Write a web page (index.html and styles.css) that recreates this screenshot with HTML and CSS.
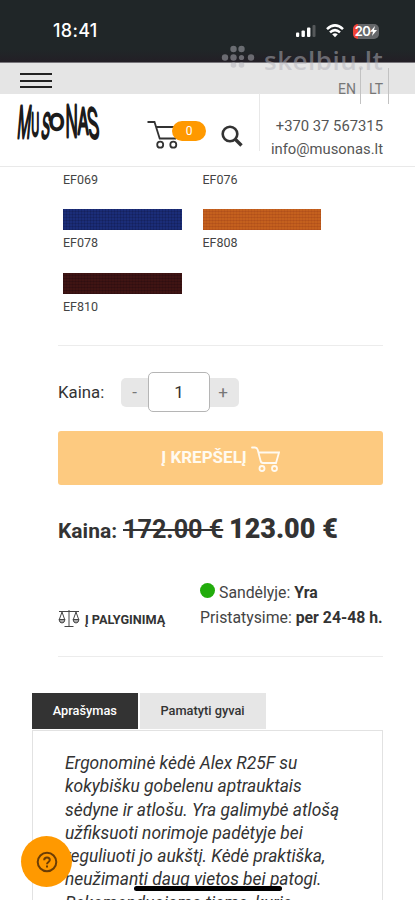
FILE: index.html
```html
<!DOCTYPE html>
<html lang="lt">
<head>
<meta charset="utf-8">
<title>Musonas</title>
<link rel="stylesheet" href="styles.css">
</head>
<body>
<div class="screen">
  <div class="status">
    <span class="time">18:41</span>
    <div class="status-icons">
      <svg width="20" height="14" viewBox="0 0 20 14"><g fill="#fff"><rect x="0" y="8.5" width="3.2" height="4.5" rx="1"/><rect x="5.5" y="6.5" width="3.4" height="6.5" rx="1"/><rect x="11" y="3.5" width="3.4" height="9.5" rx="1"/></g><rect x="16.5" y="1" width="3" height="12" rx="1" fill="#55585a"/></svg>
      <svg width="18" height="14" viewBox="0 0 18 14"><g fill="none" stroke="#fff" stroke-width="2.5"><path d="M1 5.2Q9-2.4 17 5.2"/><path d="M4 8.4Q9 3.8 14 8.4"/></g><path d="M6.2 10.3Q9 8.2 11.8 10.3L9 13.2Z" fill="#fff"/></svg>
      <span class="battery"><span class="pct">20</span><svg width="7" height="10" viewBox="0 0 7 10"><path d="M5 0 0 5.7h3L2 10l5-6H4Z" fill="#fff"/></svg></span>
    </div>
  </div>
  <div class="watermark">
    <svg width="34" height="24" viewBox="0 0 34 24"><g fill="currentColor"><circle cx="12.5" cy="4" r="3.2"/><circle cx="20.5" cy="4" r="3.2"/><circle cx="4" cy="12.500" r="3.200"/><circle cx="12.500" cy="12.500" r="3.200"/><circle cx="20.500" cy="12.500" r="2.600"/><circle cx="30" cy="12.500" r="3.200"/><circle cx="12.500" cy="20" r="2.800"/><circle cx="20.500" cy="20" r="2.800"/></g></svg>
    <span>skelbiu.lt</span>
  </div>
  <header class="header">
    <div class="left">
      <div class="menu"><i></i><i></i><i></i></div>
      <div class="brand">
        <svg class="logo" width="90" height="64" viewBox="-2 -12 90 64" aria-label="MUSONAS">
          <text transform="translate(.500 36) skewX(-5) scale(.34 1)" font-size="44">M</text>
          <text transform="translate(15.300 34) scale(.35 1)" font-size="31">U</text>
          <text transform="translate(24.500 35.500) skewX(-6) scale(.4 1)" font-size="34">S</text>
          <text transform="translate(33 27.500) scale(.92 1)" font-size="22">O</text>
          <text transform="translate(49.500 35) scale(.38 1)" font-size="43">N</text>
          <text transform="translate(61.500 31.500) scale(.48 1)" font-size="35">A</text>
          <text transform="translate(73 36) skewX(6) scale(.44 1)" font-size="41">S</text>
        </svg>
        <div class="basket">
          <svg width="34" height="30" viewBox="0 0 34 30"><g fill="none" stroke="#333" stroke-width="1.8"><path d="M.5 2H7.5L12.700 18.500H29M9 7H32L29 18.500"/><circle cx="13.200" cy="24.700" r="3"/><circle cx="26.300" cy="24.700" r="3"/></g></svg>
          <span class="count">0</span>
        </div>
        <svg class="search" width="22" height="22" viewBox="0 0 22 22"><g fill="none" stroke="#333"><circle cx="9" cy="9" r="7.300" stroke-width="2.600"/><path d="M14 14 20.500 20.500" stroke-width="3.400"/></g></svg>
      </div>
    </div>
    <div class="right">
      <div class="lang"><span>EN</span><span>LT</span></div>
      <div class="contacts"><span class="phone">+370 37 567315</span><span class="mail">info@musonas.lt</span></div>
    </div>
  </header>
  <main>
    <div class="swatches">
      <div class="sw cut"><span>EF069</span></div>
      <div class="sw cut"><span>EF076</span></div>
      <div class="sw"><div class="cloth blue"></div><span>EF078</span></div>
      <div class="sw"><div class="cloth orange"></div><span>EF808</span></div>
      <div class="sw"><div class="cloth maroon"></div><span>EF810</span></div>
    </div>
    <section class="buy">
      <div class="qty"><span class="qlabel">Kaina:</span><span class="step minus">-</span><span class="num">1</span><span class="step plus">+</span></div>
      <div class="add"><span>Į KREPŠELĮ</span><svg width="29" height="27" viewBox="0 0 29 27"><g fill="none" stroke="#fffaf0" stroke-width="1.800" stroke-linecap="round"><path d="M1 1.500H4Q6 1.500 6.700 3.700L9.500 14.500Q10 17 12 17H25L28 6.500H8"/><circle cx="11" cy="22.500" r="2.500"/><circle cx="23.500" cy="22.500" r="2.500"/></g></svg></div>
      <div class="price"><span class="plabel">Kaina:</span><s>172.00 €</s><b>123.00 €</b></div>
      <div class="info">
        <div class="compare"><svg width="22" height="18" viewBox="0 0 22 18"><g fill="none" stroke="#444" stroke-width="1"><path d="M1 1.500H21M11 0V16.500M6.500 16.500H15.500M4 2 1.300 9.500M4 2 6.700 9.500M18 2 15.300 9.500M18 2 20.700 9.500"/><path d="M1 9.500H7Q6.500 13 4 13T1 9.500ZM15 9.500H21Q20.500 13 18 13T15 9.500Z" fill="#aaa"/></g></svg><b>Į PALYGINIMĄ</b></div>
        <div class="stock"><div class="line1"><i class="dot"></i><span>Sandėlyje: <b>Yra</b></span></div><div class="line2">Pristatysime: <b>per 24-48 h.</b></div></div>
      </div>
    </section>
    <section class="details">
      <div class="tabs"><span class="tab active">Aprašymas</span><span class="tab">Pamatyti gyvai</span></div>
      <div class="panel">Ergonominė kėdė Alex R25F su<br>kokybišku gobelenu aptrauktais<br>sėdyne ir atlošu. Yra galimybė atlošą<br>užfiksuoti norimoje padėtyje bei<br>reguliuoti jo aukštį. Kėdė praktiška,<br>neužimanti daug vietos bei patogi.<br>Rekomenduojama tiems, kurie</div>
    </section>
  </main>
  <div class="help"><svg width="22" height="22" viewBox="0 0 22 22"><g fill="none" stroke="#6b3d05" stroke-width="2"><circle cx="11" cy="11" r="9.300"/><path d="M8.200 9.200Q8.200 6.500 11 6.500T13.800 9.100C13.800 11 11 11 11 13.300M11 14.600V16.500"/></g></svg></div>
  <div class="home"></div>
</div>
</body>
</html>
```

FILE: styles.css
```css
* { box-sizing: border-box; }
body { margin: 0; background: #fff; font-family: Roboto, sans-serif; color: #333; }
svg { display: block; flex: none; }
.screen { position: relative; width: 415px; height: 900px; overflow: hidden; }
.status { height: 63px; background: linear-gradient(#202628 80%, #231f26); display: flex; justify-content: space-between; padding: 0 34px 0 53px; border-bottom: 1px solid #77757a; }
.time { font: 500 18px/62px Inter, sans-serif; color: #fff; letter-spacing: .3px; }
.status-icons { display: flex; align-items: center; gap: 9px; height: 62px; margin-right: -1px; }
.status-icons svg:first-child { margin-right: 1px; margin-left: 2px; }
.battery { display: flex; align-items: center; justify-content: center; width: 26px; height: 15px; margin-right: 3px; border-radius: 5px; background: linear-gradient(90deg, #f04438 20%, #65676a 20%); color: #fff; }
.pct { font: 600 13px/15px Inter, sans-serif; letter-spacing: -.6px; }
.watermark { position: absolute; left: 221px; top: 45px; display: flex; gap: 9px; color: rgba(180, 180, 188, .5); font: 600 26px/31px "Open Sans", sans-serif; }
.watermark span { letter-spacing: .5px; }
.header { display: flex; height: 104px; background: linear-gradient(#e5e5e5 31px, #fff 31px); border-bottom: 1px solid #e9e9e9; }
.left { width: 260px; }
.menu { height: 30px; padding: 10px 0 0 20px; display: flex; flex-direction: column; gap: 4.500px; }
.menu i { width: 32px; height: 2px; background: #222; }
.brand { display: flex; align-items: flex-start; height: 58px; padding: 9px 0 0 16px; border-right: 1px solid #e8e8e8; }
.logo { margin: -12px -2px; overflow: visible; }
.logo text { font-family: Inter, sans-serif; font-weight: 300; fill: #1c1c1c; stroke: #1c1c1c; stroke-width: 2.300px; stroke-linejoin: round; vector-effect: non-scaling-stroke; }
.basket { display: flex; align-items: flex-start; margin: 18px 0 0 45px; }
.count { width: 34px; height: 20px; margin: 1px 0 0 -9px; border-radius: 10px; background: #f90; color: #fff; font-size: 12px; line-height: 20px; text-align: center; }
.search { margin: 23px 0 0 14.500px; }
.right { flex: 1; }
.lang { display: flex; justify-content: flex-end; height: 41px; padding: 5px 26px 0 0; font-size: 14px; color: #777; line-height: 43px; }
.lang span { border-right: 1px solid #c2c2c2; padding: 0 5px 0 8px; height: 36px; }
.lang span:first-child { padding-right: 4px; }
.contacts { display: flex; flex-direction: column; align-items: flex-end; padding: 11px 32px 0 0; font-size: 14.800px; line-height: 23px; color: #555; }
.swatches { display: grid; grid-template-columns: 118.500px 118.500px; column-gap: 21px; padding: 1px 0 0 63px; font-size: 12.500px; line-height: 14px; color: #444; }
.sw { height: 64px; }
.sw.cut { height: 41px; padding-top: 5px; }
.cloth { height: 21px; margin-bottom: 6px; }
.blue { background: repeating-linear-gradient(90deg, rgba(0,0,30,.15) 0 1px, transparent 1px 3px), repeating-linear-gradient(#1b2d78 0 2px, #182769 2px 3px); }
.orange { background: repeating-linear-gradient(90deg, rgba(90,20,0,.07) 0 1px, transparent 1px 3px), repeating-linear-gradient(#c4601e 0 2px, #b8551c 2px 3px); }
.maroon { background: repeating-linear-gradient(90deg, rgba(0,0,0,.1) 0 1px, transparent 1px 3px), repeating-linear-gradient(#3f1413 0 2px, #351012 2px 3px); }
.buy { width: 325px; height: 312px; margin: 8px 0 0 58px; border: solid #ececec; border-width: 1px 0; }
.qty { display: flex; align-items: center; height: 40px; margin-top: 26px; font-size: 17px; }
.qlabel { width: 63px; font-size: 16.800px; }
.step { width: 29px; height: 29px; line-height: 28px; background: #e7e7e7; text-align: center; color: #777; }
.minus { border-radius: 5px 0 0 5px; width: 27px; }
.plus { border-radius: 0 5px 5px 0; padding-right: 3px; }
.num { width: 62px; height: 40px; border: 1px solid #b5b5b5; border-radius: 5px; line-height: 38px; text-align: center; }
.add { display: flex; align-items: center; justify-content: center; gap: 4px; height: 54px; margin-top: 19px; background: #fdca80; border-radius: 3px; color: #fffaf0; font-size: 17px; font-weight: 700; }
.add svg { margin-top: 2px; }
.add span { margin-top: -2px; }
.price { display: flex; align-items: baseline; height: 40px; margin-top: 24px; line-height: 40px; font-weight: 700; white-space: nowrap; }
.plabel { font-size: 21px; width: 65px; }
.price s { font-size: 25.200px; width: 106px; text-decoration-thickness: 2px; }
.price b { font-size: 27px; }
.info { display: flex; justify-content: space-between; margin-top: 31px; white-space: nowrap; }
.compare { display: flex; align-items: center; gap: 5px; height: 22px; margin-top: 28px; font-size: 12.700px; }
.stock { width: 183px; font-size: 15.800px; line-height: 25px; color: #444; }
.stock b { color: #333; }
.line1 { display: flex; align-items: center; gap: 4px; }
.dot { width: 15px; height: 15px; margin-top: -5px; border-radius: 50%; background: #22ac0c; }
.details { margin: 35px 0 0 32px; width: 351px; }
.tabs { display: flex; gap: 2px; height: 38px; padding-top: 1px; }
.tab { height: 36px; width: 126px; background: #e6e6e6; font-size: 12.800px; font-weight: 500; line-height: 36px; text-align: center; }
.tab.active { width: 105.500px; background: #333; color: #fff; }
.panel { border: 1px solid #e2e2e2; height: 250px; padding: 21px 0 0 32px; font-size: 17.400px; font-style: italic; line-height: 23.250px; white-space: nowrap; }
.help { position: absolute; left: 21px; top: 836px; width: 51px; height: 51px; border-radius: 50%; background: #f90; display: grid; place-items: center; }
.home { position: absolute; left: 134px; top: 886px; width: 148px; height: 5px; border-radius: 3px; background: #000; }
```
